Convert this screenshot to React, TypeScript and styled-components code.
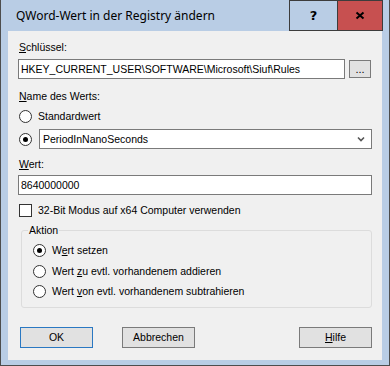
import { FC, ReactNode } from 'react';
import styled, { createGlobalStyle } from 'styled-components';

const GlobalStyle = createGlobalStyle`
  html, body {
    margin: 0;
    padding: 0;
    background: #ffffff;
  }
  * {
    box-sizing: border-box;
  }
`;

const Window = styled.div`
  width: 390px;
  height: 366px;
  display: flex;
  flex-direction: column;
  background: #b9cde5;
  border-left: 1px solid #4d4d4d;
  border-right: 1px solid #4d4d4d;
  border-bottom: 1px solid #4d4d4d;
`;

const TitleBar = styled.div`
  height: 31px;
  display: flex;
  flex-direction: row;
  align-items: flex-start;
  padding: 0 6px 0 15px;
`;

const Title = styled.div`
  flex: 1;
  font-family: 'Noto Sans', 'Open Sans', sans-serif;
  font-size: 12px;
  line-height: 31px;
  color: #000000;
  white-space: nowrap;
`;

const CaptionButton = styled.div<{ $close?: boolean }>`
  width: ${(p) => (p.$close ? '46px' : '48px')};
  height: 31px;
  display: flex;
  align-items: center;
  justify-content: center;
  background: ${(p) => (p.$close ? '#c75050' : '#b9cde5')};
  border: 1px solid #3c3c3c;
  border-right: ${(p) => (p.$close ? '1px solid #3c3c3c' : 'none')};
  font-family: 'DejaVu Sans', sans-serif;
  font-weight: bold;
  font-size: 13px;
  color: #000000;
`;

const Client = styled.div`
  flex: 1;
  margin: 0 7px 7px 7px;
  background: #f0f0f0;
  display: flex;
  flex-direction: column;
  padding: 10px 10px 12px 10px;
  font-family: 'Liberation Sans', Arial, sans-serif;
  font-size: 10.5px;
  color: #000000;
`;

const Label = styled.div<{ $top: number }>`
  margin-top: ${(p) => p.$top}px;
  padding-left: 1px;
  line-height: 13px;
  height: 13px;
`;

const U = styled.span`
  text-decoration: underline;
  text-underline-offset: 1px;
`;

const Row = styled.div<{ $top: number; $gap?: number }>`
  display: flex;
  flex-direction: row;
  align-items: center;
  margin-top: ${(p) => p.$top}px;
  gap: ${(p) => p.$gap ?? 0}px;
`;

const TextBox = styled.div<{ $width?: number }>`
  height: 20px;
  width: ${(p) => (p.$width ? `${p.$width}px` : '100%')};
  background: #ffffff;
  border: 1px solid #7a7a7a;
  padding: 0 2px;
  line-height: 18px;
  white-space: nowrap;
  overflow: hidden;
`;

const SmallButton = styled.div`
  width: 22px;
  height: 18px;
  margin-left: 4px;
  background: #e1e1e1;
  border: 1px solid #7a7a7a;
  display: flex;
  align-items: flex-end;
  justify-content: center;
  padding-bottom: 3px;
  line-height: 9px;
  font-size: 11px;
`;

const Radio = styled.div<{ $checked?: boolean }>`
  width: 13px;
  height: 13px;
  border-radius: 50%;
  border: 1px solid #333333;
  background: #ffffff;
  display: flex;
  align-items: center;
  justify-content: center;
  flex-shrink: 0;
  &::after {
    content: '';
    width: 5px;
    height: 5px;
    border-radius: 50%;
    background: #000000;
    display: ${(p) => (p.$checked ? 'block' : 'none')};
  }
`;

const CheckBox = styled.div`
  width: 13px;
  height: 13px;
  border: 1px solid #333333;
  background: #ffffff;
  flex-shrink: 0;
`;

const OptionRow = styled.div<{ $top: number; $indent?: number }>`
  display: flex;
  flex-direction: row;
  align-items: center;
  height: 16px;
  margin-top: ${(p) => p.$top}px;
  padding-left: ${(p) => p.$indent ?? 1}px;
  gap: 6px;
  line-height: 13px;
`;

const Combo = styled.div`
  flex: 1;
  height: 20px;
  margin-left: 7px;
  background: #ffffff;
  border: 1px solid #7a7a7a;
  display: flex;
  align-items: center;
  padding: 0 6px 0 3px;
`;

const ComboText = styled.span`
  flex: 1;
`;

const Group = styled.fieldset`
  margin: 6px 0 0 3px;
  padding: 1px 0 8px 0;
  border: 1px solid #dcdcdc;
  border-radius: 3px;
  display: flex;
  flex-direction: column;
  min-width: 0;
`;

const Legend = styled.legend`
  padding: 0 1px;
  margin-left: 6px;
  line-height: 13px;
`;

const ButtonRow = styled.div`
  display: flex;
  flex-direction: row;
  margin-top: 19px;
  padding: 0 0 0 2px;
  gap: 29px;
`;

const DialogButton = styled.div<{ $default?: boolean; $right?: boolean }>`
  width: 73px;
  height: 21px;
  background: #e1e1e1;
  border: 1px solid ${(p) => (p.$default ? '#2a78c2' : '#7a7a7a')};
  display: flex;
  align-items: center;
  justify-content: center;
  line-height: 13px;
  margin-left: ${(p) => (p.$right ? 'auto' : '0')};
`;

const Chevron: FC = () => (
  <svg width="8" height="6" viewBox="0 0 8 6">
    <path d="M1 1.5 L4 4.5 L7 1.5" stroke="#555555" strokeWidth="1.6" fill="none" />
  </svg>
);

const CloseGlyph: FC = () => (
  <svg width="10" height="9" viewBox="0 0 10 9">
    <path d="M1.5 1.5 L8.5 7.5 M8.5 1.5 L1.5 7.5" stroke="#000000" strokeWidth="2" fill="none" />
  </svg>
);

interface OptionProps {
  checked?: boolean;
  top: number;
  indent?: number;
  children: ReactNode;
}

const Option: FC<OptionProps> = ({ checked, top, indent, children }) => (
  <OptionRow $top={top} $indent={indent}>
    <Radio $checked={checked} />
    <span>{children}</span>
  </OptionRow>
);

const App: FC = () => {
  return (
    <Window>
      <GlobalStyle />
      <TitleBar>
        <Title>QWord-Wert in der Registry ändern</Title>
        <CaptionButton>?</CaptionButton>
        <CaptionButton $close>
          <CloseGlyph />
        </CaptionButton>
      </TitleBar>
      <Client>
        <Label $top={0}>
          <U>S</U>chlüssel:
        </Label>
        <Row $top={5}>
          <TextBox $width={327}>HKEY_CURRENT_USER\SOFTWARE\Microsoft\Siuf\Rules</TextBox>
          <SmallButton>...</SmallButton>
        </Row>
        <Label $top={11}>
          <U>N</U>ame des Werts:
        </Label>
        <Option top={5}>Standardwert</Option>
        <Row $top={5}>
          <OptionRow $top={0}>
            <Radio $checked />
          </OptionRow>
          <Combo>
            <ComboText>PeriodInNanoSeconds</ComboText>
            <Chevron />
          </Combo>
        </Row>
        <Label $top={9}>
          <U>W</U>ert:
        </Label>
        <Row $top={4}>
          <TextBox>8640000000</TextBox>
        </Row>
        <OptionRow $top={7}>
          <CheckBox />
          <span>32-Bit Modus auf x64 Computer verwenden</span>
        </OptionRow>
        <Group>
          <Legend>Aktion</Legend>
          <Option checked top={4} indent={11}>
            W<U>e</U>rt setzen
          </Option>
          <Option top={5} indent={11}>
            Wert <U>z</U>u evtl. vorhandenem addieren
          </Option>
          <Option top={4} indent={11}>
            Wert <U>v</U>on evtl. vorhandenem subtrahieren
          </Option>
        </Group>
        <ButtonRow>
          <DialogButton $default>OK</DialogButton>
          <DialogButton>Abbrechen</DialogButton>
          <DialogButton $right>
            <U>H</U>ilfe
          </DialogButton>
        </ButtonRow>
      </Client>
    </Window>
  );
};

export default App;
